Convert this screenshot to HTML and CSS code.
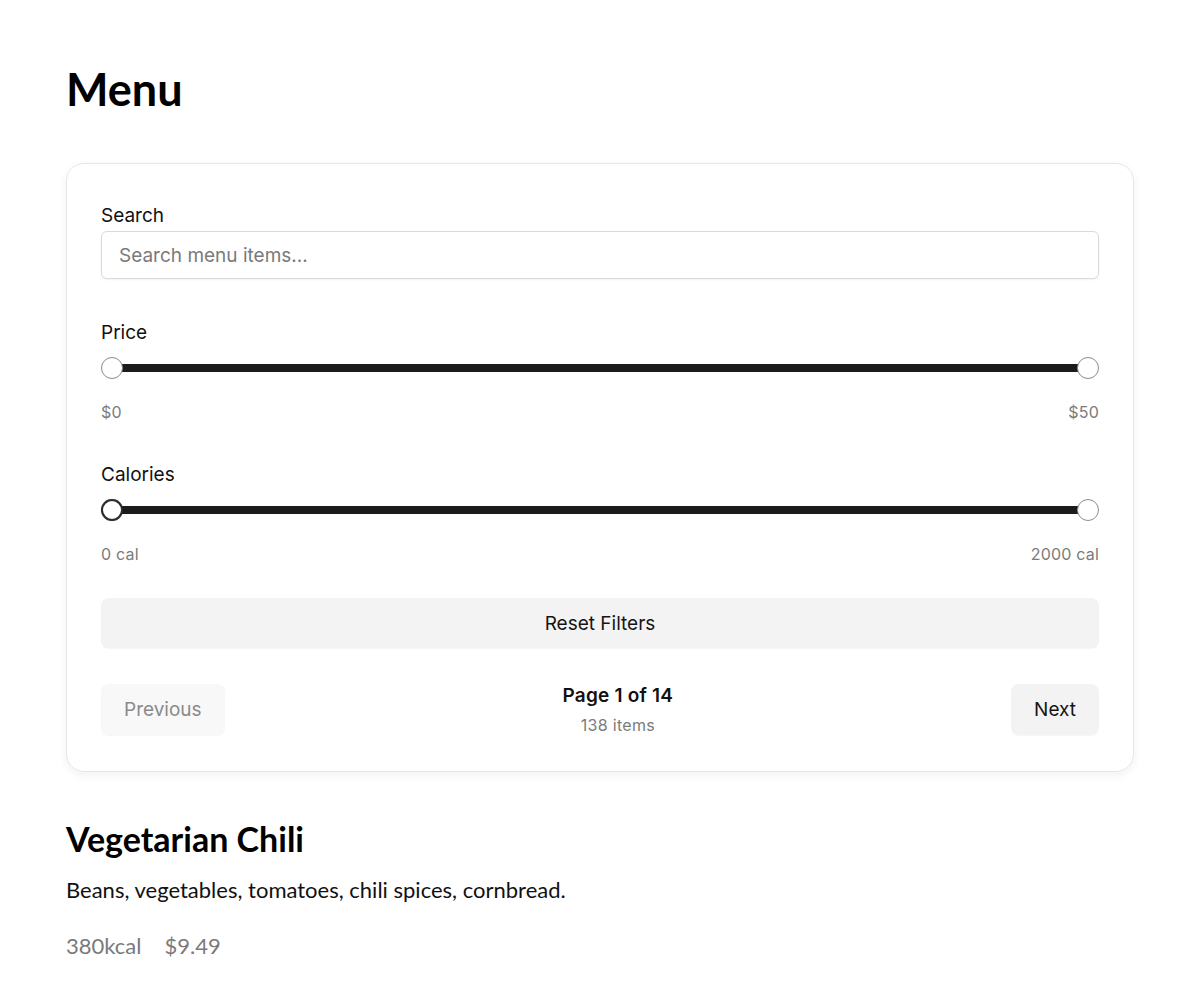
FILE: index.html
```html
<!DOCTYPE html>
<html lang="en">
<head>
<meta charset="utf-8">
<title>Menu</title>
<link rel="stylesheet" href="styles.css">
</head>
<body>
<main class="page">
  <h1 class="title">Menu</h1>

  <section class="card">
    <div class="field field-search">
      <label class="label" for="search">Search</label>
      <input id="search" class="input" type="text" placeholder="Search menu items...">
    </div>

    <div class="field field-range">
      <div class="label">Price</div>
      <div class="slider">
        <div class="track"></div>
        <span class="thumb thumb-min"></span>
        <span class="thumb thumb-max"></span>
      </div>
      <div class="range-values"><span>$0</span><span>$50</span></div>
    </div>

    <div class="field field-range">
      <div class="label">Calories</div>
      <div class="slider">
        <div class="track"></div>
        <span class="thumb thumb-min thumb-active"></span>
        <span class="thumb thumb-max"></span>
      </div>
      <div class="range-values"><span>0 cal</span><span>2000 cal</span></div>
    </div>

    <button class="btn btn-reset" type="button">Reset Filters</button>

    <div class="pager">
      <button class="btn btn-page btn-disabled" type="button">Previous</button>
      <div class="pager-info">
        <div class="pager-page">Page 1 of 14</div>
        <div class="pager-count">138 items</div>
      </div>
      <button class="btn btn-page" type="button">Next</button>
    </div>
  </section>

  <article class="item">
    <h2 class="item-name">Vegetarian Chili</h2>
    <p class="item-desc">Beans, vegetables, tomatoes, chili spices, cornbread.</p>
    <div class="item-meta"><span>380kcal</span><span>$9.49</span></div>
  </article>
</main>
</body>
</html>
```

FILE: styles.css
```css
* { box-sizing: border-box; }

html, body {
  margin: 0;
  padding: 0;
  background: #ffffff;
}

body {
  font-family: "Lato", "Noto Sans", sans-serif;
  color: #000;
}

.page {
  padding: 62px 66px 0 66px;
}

.title {
  margin: 0;
  font-family: "Lato", sans-serif;
  font-weight: 700;
  font-size: 45px;
  line-height: 1.2;
  color: #000;
}

.card {
  margin-top: 47px;
  border: 1px solid #e6e6e6;
  border-radius: 18px;
  box-shadow: 0 3px 10px rgba(0, 0, 0, 0.06);
  padding: 37px 34px 36px 34px;
  font-family: "Inter", "Noto Sans", sans-serif;
  display: flex;
  flex-direction: column;
}

.field { display: flex; flex-direction: column; }

.label {
  padding-top: 1px;
  font-size: 19px;
  line-height: 27px;
  color: #111;
  font-weight: 400;
}

.field-search .label { margin-bottom: 2px; }

.input {
  height: 48px;
  width: 100%;
  border: 1px solid #dadada;
  border-radius: 6px;
  padding: 0 17px;
  font-family: "Inter", sans-serif;
  font-size: 19px;
  color: #111;
  box-shadow: 0 1px 2px rgba(0, 0, 0, 0.05);
  outline: none;
}
.input::placeholder { color: #7a7a7a; }

.field-range { margin-top: 39px; }
.field-range + .field-range { margin-top: 36px; }

.slider {
  position: relative;
  height: 22px;
  margin-top: 11px;
}

.track {
  position: absolute;
  left: 11px;
  right: 11px;
  top: 7px;
  height: 8px;
  background: #1b1b1d;
}

.thumb {
  position: absolute;
  top: 0;
  width: 22px;
  height: 22px;
  border-radius: 50%;
  background: #fff;
  border: 1.5px solid #8c8c8c;
}
.thumb-min { left: 0; }
.thumb-max { right: 0; }
.thumb-active {
  border: 2px solid #2a2a2a;
  box-shadow: 0 0 1px rgba(0,0,0,0.4);
}

.range-values {
  margin-top: 21px;
  display: flex;
  justify-content: space-between;
  font-size: 16px;
  line-height: 24px;
  letter-spacing: 0.2px;
  color: #7b7b7b;
}

.btn {
  font-family: "Inter", sans-serif;
  border: none;
  cursor: pointer;
  border-radius: 8px;
  font-size: 19px;
  font-weight: 400;
  color: #151515;
}

.btn-reset {
  margin-top: 32px;
  height: 50px;
  width: 100%;
  background: #f3f3f3;
  box-shadow: 0 1px 1px rgba(0, 0, 0, 0.04);
}

.pager {
  margin-top: 35px;
  display: flex;
  align-items: center;
  justify-content: space-between;
}

.btn-page {
  height: 51px;
  padding: 0 23px;
  background: #f3f3f3;
  box-shadow: 0 1px 1px rgba(0, 0, 0, 0.04);
}
.btn-disabled {
  background: #f8f8f8;
  color: #8a8a8a;
}

.pager-info {
  text-align: center;
}
.pager-page {
  font-size: 19px;
  font-weight: 600;
  line-height: 26px;
  letter-spacing: 0.2px;
  color: #111;
}
.pager-count {
  margin-top: 6px;
  font-size: 16px;
  line-height: 20px;
  letter-spacing: 0.3px;
  color: #7b7b7b;
}

.item {
  margin-top: 47px;
}
.item-name {
  margin: 0;
  font-family: "Lato", sans-serif;
  font-weight: 700;
  font-size: 34px;
  line-height: 1.2;
}
.item-desc {
  margin: 17px 0 0 0;
  font-size: 22px;
  line-height: 26px;
  color: #111;
}
.item-meta {
  margin-top: 30px;
  display: flex;
  gap: 23px;
  font-size: 22px;
  line-height: 26px;
  color: #7a7a7a;
}
```
